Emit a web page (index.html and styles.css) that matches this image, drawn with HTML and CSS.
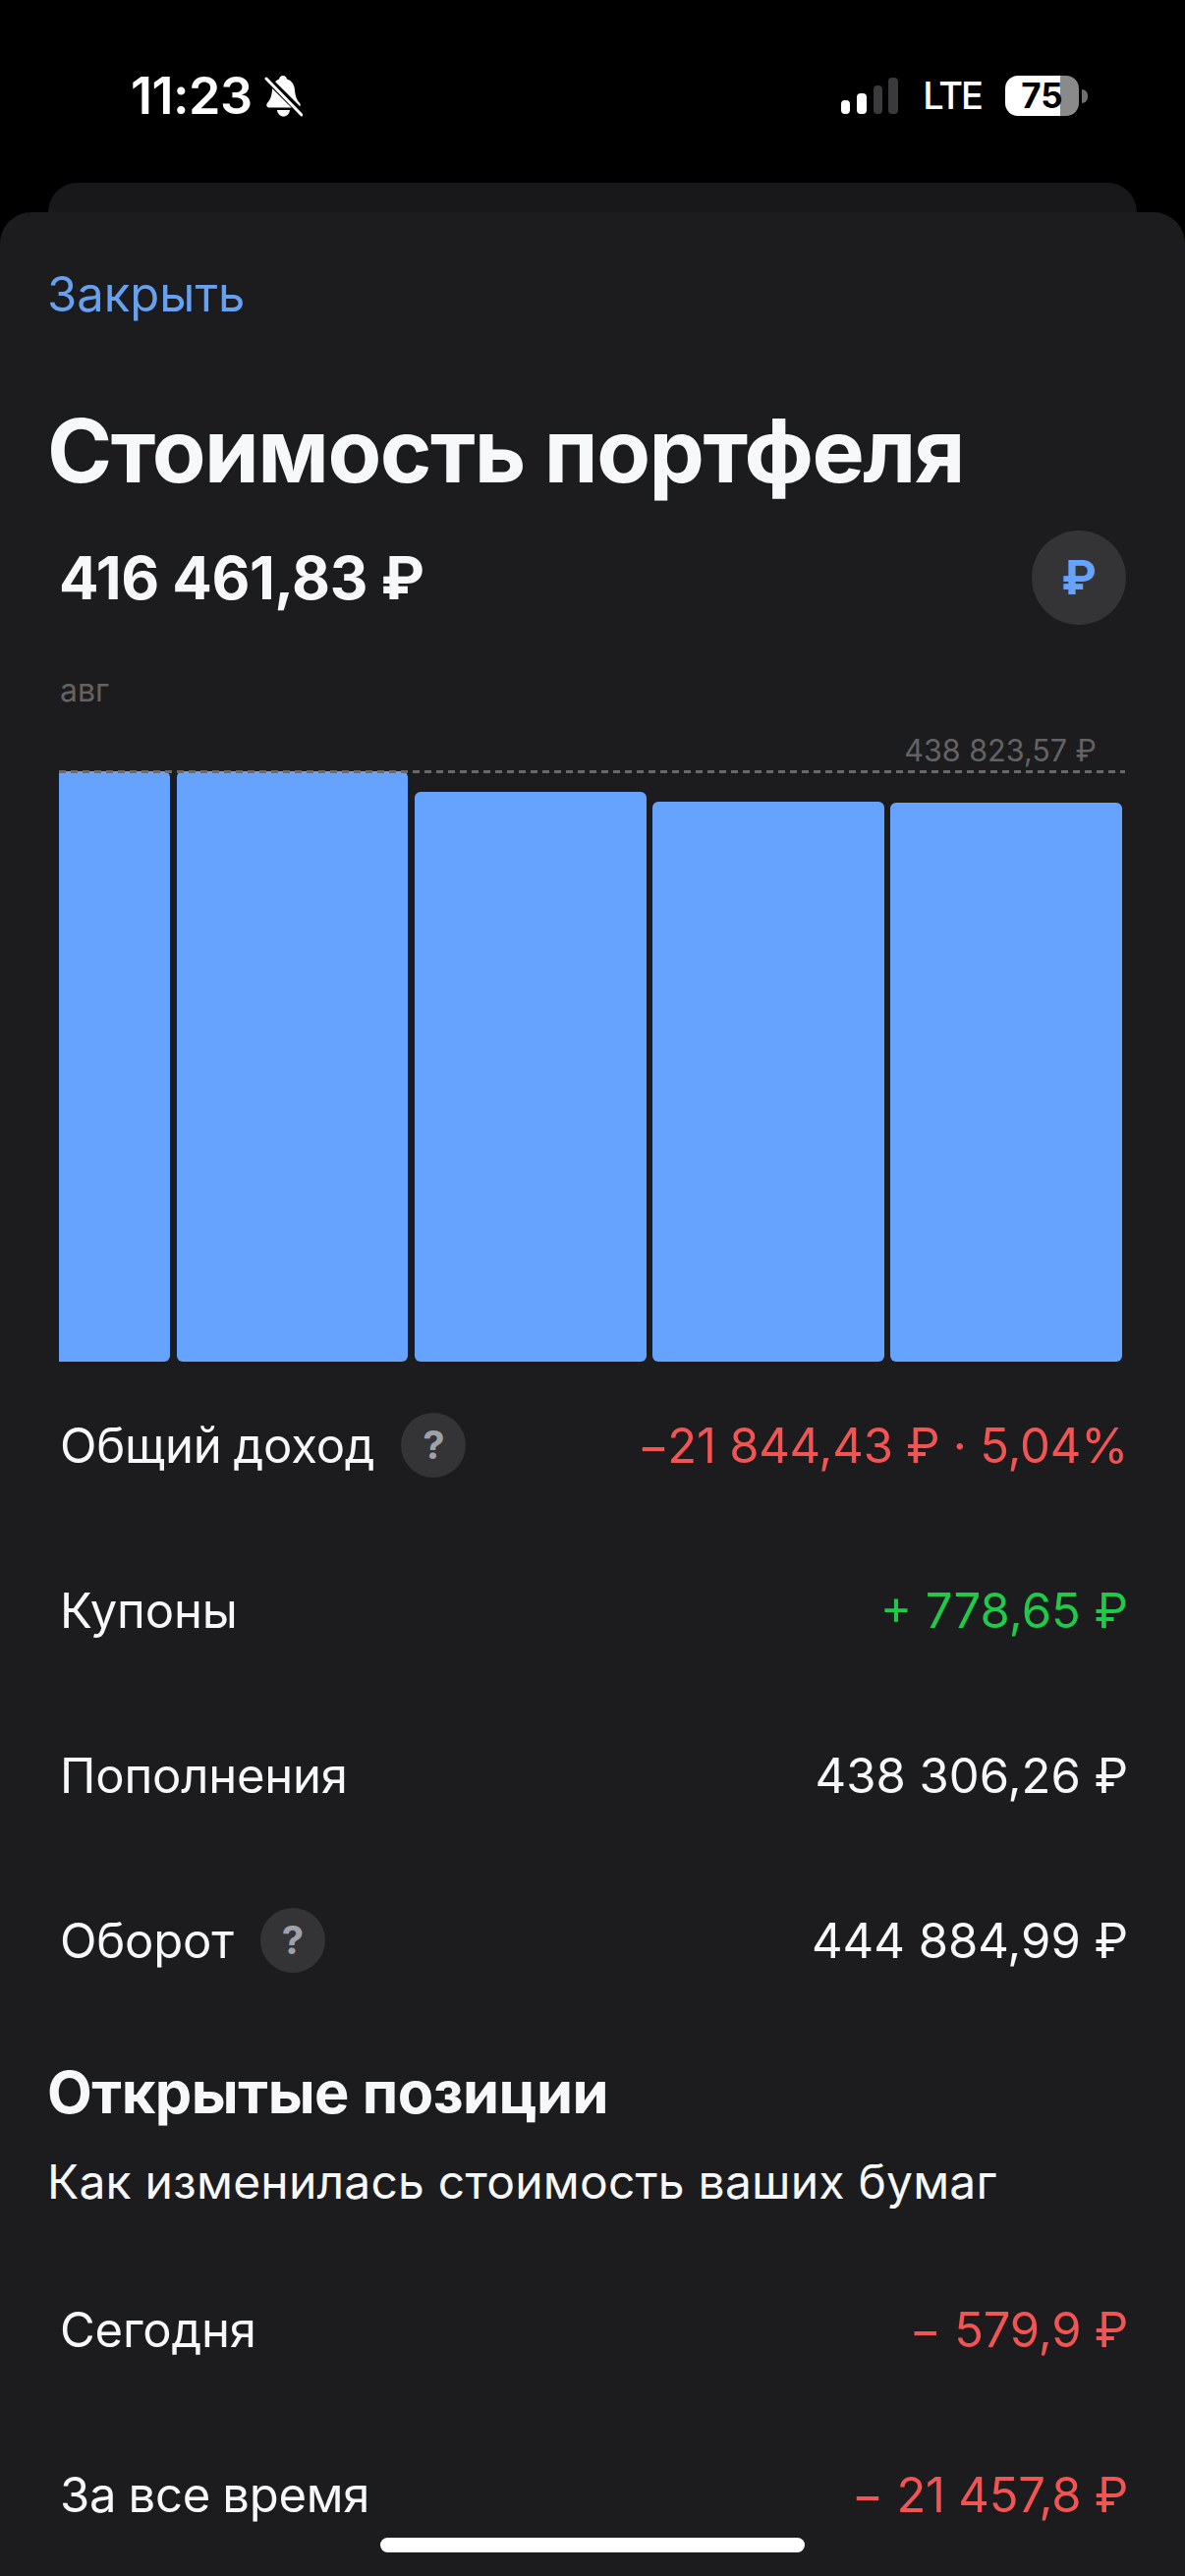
FILE: index.html
```html
<!DOCTYPE html>
<html lang="ru">
<head>
    <meta charset="UTF-8">
    <meta name="viewport" content="width=device-width, initial-scale=1.0">
    <title>Стоимость портфеля</title>
    <link rel="stylesheet" href="styles.css">
</head>
<body>
    <div class="status-bar">
        <div class="status-left">
            <span class="time">11:23</span>
            <svg class="bell" viewBox="0 0 39 42" width="39" height="42">
                <path fill="#fff" d="M19 0c2 0 3.500 1.500 4 3.500 5 1.500 7.500 5.500 8 11 .5 6 1.500 9.500 5 13.500 1.500 2 .5 4.500-2 4.500H5c-2.500 0-3.500-2.500-2-4.500 3.500-4 4.500-7.500 5-13.500.5-5.500 3-9.500 7-11C15.500 1.500 17 0 19 0z"/>
                <path fill="#fff" d="M13 35h13c-.5 4-3 6.500-6.500 6.500S13.500 39 13 35z"/>
                <path fill="none" stroke="#000" stroke-width="7" d="M-1 -1L40 40"/>
                <path fill="none" stroke="#fff" stroke-width="3" stroke-linecap="round" d="M2 3L38 40"/>
            </svg>
        </div>
        <div class="status-right">
            <svg class="signal" viewBox="0 0 58 37" width="58" height="37">
                <rect x="0" y="23" width="9" height="14" rx="4" fill="#fff"/>
                <rect x="16" y="16" width="10" height="21" rx="4" fill="#fff"/>
                <rect x="33" y="8" width="9" height="29" rx="4" fill="#3a3a3c"/>
                <rect x="48" y="0" width="10" height="37" rx="4" fill="#3a3a3c"/>
            </svg>
            <span class="lte">LTE</span>
            <div class="battery"><span>75</span></div>
            <div class="battery-nub"></div>
        </div>
    </div>

    <div class="back-card"></div>

    <div class="sheet">
        <div class="close-link">Закрыть</div>
        <h1 class="title">Стоимость портфеля</h1>

        <div class="total-row">
            <span class="total">416 461,83 ₽</span>
            <div class="currency-btn">₽</div>
        </div>

        <div class="chart">
            <div class="month">авг</div>
            <div class="max-label">438 823,57 ₽</div>
            <div class="plot">
                <div class="max-line"></div>
                <div class="bar bar-short" style="height: 601px"></div>
                <div class="bar" style="height: 601px"></div>
                <div class="bar" style="height: 580px"></div>
                <div class="bar" style="height: 570px"></div>
                <div class="bar" style="height: 569px"></div>
            </div>
        </div>

        <div class="rows">
            <div class="row">
                <div class="row-label">Общий доход <span class="hint">?</span></div>
                <div class="red">−21 844,43 ₽ · 5,04%</div>
            </div>
            <div class="row">
                <div class="row-label">Купоны</div>
                <div class="green">+ 778,65 ₽</div>
            </div>
            <div class="row">
                <div class="row-label">Пополнения</div>
                <div>438 306,26 ₽</div>
            </div>
            <div class="row">
                <div class="row-label">Оборот <span class="hint">?</span></div>
                <div>444 884,99 ₽</div>
            </div>
        </div>

        <h2 class="section-title">Открытые позиции</h2>
        <p class="section-sub">Как изменилась стоимость ваших бумаг</p>

        <div class="rows rows-positions">
            <div class="row">
                <div class="row-label">Сегодня</div>
                <div class="red">− 579,9 ₽</div>
            </div>
            <div class="row">
                <div class="row-label">За все время</div>
                <div class="red">− 21 457,8 ₽</div>
            </div>
        </div>
    </div>

    <div class="home-bar"></div>
</body>
</html>
```

FILE: styles.css
```css
* {
    box-sizing: border-box;
}

body {
    margin: 0;
    height: 2622px;
    overflow: hidden;
    background-color: #000;
    color: #fff;
    font-family: Inter, "Liberation Sans", sans-serif;
    position: relative;
}

/* status bar */
.status-bar {
    height: 186px;
    padding: 77px 99px 0 133px;
    display: flex;
    justify-content: space-between;
    align-items: flex-start;
}

.status-left {
    display: flex;
    align-items: center;
    gap: 12px;
}

.time {
    font-size: 52px;
    font-weight: 600;
    line-height: 42px;
    letter-spacing: -0.5px;
}

.status-right {
    display: flex;
    align-items: center;
    height: 41px;
}

.signal {
    margin-right: 25px;
}

.lte {
    font-size: 38px;
    font-weight: 500;
    line-height: 41px;
    letter-spacing: -2px;
    margin-right: 24px;
}

.battery {
    width: 75px;
    height: 41px;
    border-radius: 13px;
    background: linear-gradient(to right, #fff 75%, #8a8a8a 75%);
    color: #000;
    font-size: 35px;
    font-weight: 700;
    line-height: 41px;
    text-align: center;
}

.battery-nub {
    width: 6px;
    height: 14px;
    margin-left: 3px;
    background-color: #6f6f6f;
    border-radius: 0 7px 7px 0;
}

.back-card {
    height: 30px;
    margin: 0 49px;
    background-color: #18181a;
    border-radius: 30px 30px 0 0;
}

/* sheet */
.sheet {
    height: 2406px;
    padding: 0 60px 0 48px;
    background-color: #1c1c1e;
    border-radius: 32px 32px 0 0;
}

.close-link {
    padding-top: 54px;
    font-size: 49px;
    line-height: 60px;
    color: #66a0f0;
}

.title {
    margin: 79px 0 0;
    font-size: 89.5px;
    font-weight: 700;
    line-height: 100px;
    letter-spacing: -1.5px;
    color: #f7f8fa;
}

.total-row {
    margin-top: 31px;
    padding-left: 12px;
    display: flex;
    justify-content: space-between;
    align-items: center;
}

.total {
    font-size: 60px;
    font-weight: 700;
    letter-spacing: -0.5px;
    color: #f7f8fa;
}

.currency-btn {
    width: 96px;
    height: 96px;
    border-radius: 50%;
    background-color: #343436;
    color: #66a3ff;
    font-size: 48px;
    font-weight: 700;
    line-height: 96px;
    text-align: center;
}

.chart {
    margin: 47px 4px 0 12px;
}

.month {
    padding-left: 1px;
    font-size: 32px;
    line-height: 40px;
    color: #636365;
}

.max-label {
    margin-top: 23px;
    padding-right: 26px;
    font-size: 30.5px;
    line-height: 36px;
    text-align: right;
    color: #636365;
}

.plot {
    height: 601px;
    margin-top: 3px;
    display: flex;
    align-items: flex-end;
    gap: 6.5px;
    position: relative;
}

.max-line {
    position: absolute;
    top: -1px;
    left: 0;
    right: -3px;
    height: 3px;
    background: repeating-linear-gradient(to right, #6a6a6c 0 7px, transparent 7px 12px);
    z-index: 1;
}

.bar {
    flex: 1;
    background-color: #66a3ff;
    border-radius: 6px;
}

.bar-short {
    flex: none;
    width: 113px;
    border-radius: 0 6px 6px 0;
}

/* rows */
.rows {
    padding-top: 1px;
    padding-left: 13px;
    margin-right: -2px;
}

.rows-positions {
    margin-top: 35px;
}

.row {
    height: 168px;
    display: flex;
    justify-content: space-between;
    align-items: center;
    font-size: 49px;
    color: #f7f8fa;
}

.row-label {
    display: flex;
    align-items: center;
    gap: 27px;
    letter-spacing: -0.2px;
    word-spacing: -1.5px;
}

.red {
    color: #f25353;
    letter-spacing: -0.25px;
}

.green {
    color: #1fc94a;
}

.hint {
    width: 66px;
    height: 66px;
    border-radius: 50%;
    background-color: #343436;
    color: #a0a2aa;
    font-size: 40px;
    font-weight: 700;
    line-height: 66px;
    text-align: center;
}

.section-title {
    margin: 34px 0 0;
    font-size: 59.5px;
    font-weight: 700;
    line-height: 72px;
    letter-spacing: -0.5px;
    color: #f7f8fa;
}

.section-sub {
    margin: 26px 0 0;
    font-size: 48px;
    line-height: 60px;
    letter-spacing: 0.2px;
    color: #f7f8fa;
}

.home-bar {
    position: absolute;
    left: 387px;
    top: 2583px;
    width: 432px;
    height: 15px;
    border-radius: 8px;
    background-color: #fff;
}
```
